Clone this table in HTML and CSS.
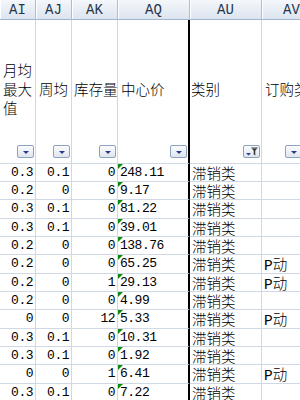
FILE: index.html
```html
<!DOCTYPE html>
<html lang="zh">
<head>
<meta charset="utf-8">
<link rel="stylesheet" href="styles.css">
</head>
<body>
<div class="sheet">
  <div class="row hdr">
    <div class="c">AI</div>
    <div class="c">AJ</div>
    <div class="c">AK</div>
    <div class="c">AQ</div>
    <div class="c">AU</div>
    <div class="c">AV</div>
  </div>
  <div class="row title">
    <div class="c"><span class="t">月均最大值</span><span class="fb"><span class="ar"></span></span></div>
    <div class="c"><span class="t">周均</span><span class="fb"><span class="ar"></span></span></div>
    <div class="c nw"><span class="t">库存量</span><span class="fb"><span class="ar"></span></span></div>
    <div class="c aq"><span class="t">中心价</span><span class="fb"><span class="ar"></span></span></div>
    <div class="c"><span class="t">类别</span><span class="fb fb-on"><svg width="15" height="11" viewBox="0 0 15 11"><path d="M2 7h5l-2.5 2.5z" fill="#2a3f8f"/><path d="M7 1.5h7l-2.7 3.3v4.7l-1.6-1v-3.7z" fill="#3a3a3a"/><path d="M8 2h5" stroke="#9a9a9a" stroke-width="1"/></svg></span></div>
    <div class="c nw last"><span class="t">订购类别</span><span class="fb"><span class="ar"></span></span></div>
  </div>
  <div class="row d"><div class="c n">0.3</div><div class="c n">0.1</div><div class="c n">0</div><div class="c aq">248.11</div><div class="c k">滞销类</div><div class="c k"></div></div>
  <div class="row d"><div class="c n">0.2</div><div class="c n">0</div><div class="c n">6</div><div class="c aq">9.17</div><div class="c k">滞销类</div><div class="c k"></div></div>
  <div class="row d"><div class="c n">0.3</div><div class="c n">0.1</div><div class="c n">0</div><div class="c aq">81.22</div><div class="c k">滞销类</div><div class="c k"></div></div>
  <div class="row d"><div class="c n">0.3</div><div class="c n">0.1</div><div class="c n">0</div><div class="c aq">39.01</div><div class="c k">滞销类</div><div class="c k"></div></div>
  <div class="row d"><div class="c n">0.2</div><div class="c n">0</div><div class="c n">0</div><div class="c aq">138.76</div><div class="c k">滞销类</div><div class="c k"></div></div>
  <div class="row d"><div class="c n">0.2</div><div class="c n">0</div><div class="c n">0</div><div class="c aq">65.25</div><div class="c k">滞销类</div><div class="c k">P动</div></div>
  <div class="row d"><div class="c n">0.2</div><div class="c n">0</div><div class="c n">1</div><div class="c aq">29.13</div><div class="c k">滞销类</div><div class="c k">P动</div></div>
  <div class="row d"><div class="c n">0.2</div><div class="c n">0</div><div class="c n">0</div><div class="c aq">4.99</div><div class="c k">滞销类</div><div class="c k"></div></div>
  <div class="row d"><div class="c n">0</div><div class="c n">0</div><div class="c n">12</div><div class="c aq">5.33</div><div class="c k">滞销类</div><div class="c k">P动</div></div>
  <div class="row d"><div class="c n">0.3</div><div class="c n">0.1</div><div class="c n">0</div><div class="c aq">10.31</div><div class="c k">滞销类</div><div class="c k"></div></div>
  <div class="row d"><div class="c n">0.3</div><div class="c n">0.1</div><div class="c n">0</div><div class="c aq">1.92</div><div class="c k">滞销类</div><div class="c k"></div></div>
  <div class="row d"><div class="c n">0</div><div class="c n">0</div><div class="c n">1</div><div class="c aq">6.41</div><div class="c k">滞销类</div><div class="c k">P动</div></div>
  <div class="row d"><div class="c n">0.3</div><div class="c n">0.1</div><div class="c n">0</div><div class="c aq">7.22</div><div class="c k">滞销类</div><div class="c k"></div></div>
  <div class="row d"><div class="c n"></div><div class="c n"></div><div class="c n"></div><div class="c aq"></div><div class="c k"></div><div class="c k"></div></div>
</div>
</body>
</html>
```

FILE: styles.css
```css
html, body {
  margin: 0;
  padding: 0;
  background: #fff;
  overflow: hidden;
}
.sheet {
  width: 300px;
  height: 400px;
  overflow: hidden;
  font-family: "Liberation Mono", "Noto Sans CJK SC", monospace;
  font-size: 13px;
  color: #000;
}
.row {
  display: grid;
  grid-template-columns: 36px 36px 46px 72px 72px 60px;
  width: 322px;
}
.c {
  box-sizing: border-box;
  border-right: 1px solid #d0d7e5;
  border-bottom: 1px solid #d0d7e5;
  position: relative;
  overflow: hidden;
  white-space: nowrap;
}
/* column letters */
.hdr {
  height: 20px;
}
.hdr .c {
  background: linear-gradient(#f4f7fb, #dce4ef);
  border-right: 1px solid #a9bdd6;
  border-bottom: 1px solid #9eb6ce;
  box-shadow: inset 1px 0 0 #fdfeff;
  display: flex;
  align-items: center;
  justify-content: center;
  color: #27364a;
  font-size: 14px;
  padding-top: 1px;
}
/* field names */
.title {
  height: 144px;
}
.title .c {
  display: flex;
  align-items: center;
  padding-left: 3px;
  font-size: 14.5px;
  line-height: 19px;
  white-space: normal;
  font-weight: 300;
}
.title .c:nth-child(5) {
  padding-left: 1px;
}
.title .nw {
  white-space: nowrap;
  overflow: visible;
}
.title .nw:nth-child(3) {
  padding-left: 2px;
}
.title .t {
  display: block;
}
.fb {
  position: absolute;
  right: 1px;
  bottom: 5px;
  width: 17px;
  height: 13px;
  box-sizing: border-box;
  border: 1px solid #8ea2c0;
  border-radius: 2px;
  background: linear-gradient(#fbfcfe, #dfe5ee);
  display: flex;
  align-items: center;
  justify-content: center;
}
.title .last .fb {
  right: auto;
  left: 23px;
}
.ar {
  width: 0;
  height: 0;
  border-left: 3px solid transparent;
  border-right: 3px solid transparent;
  border-top: 3px solid #26398a;
  margin-top: 2px;
}
.fb-on svg {
  display: block;
}
/* data rows */
.d {
  height: 18px;
}
.d:nth-child(3n+2) {
  height: 19px;
}
.d .c {
  display: flex;
  align-items: center;
  padding-bottom: 1px;
  letter-spacing: -0.5px;
}
.d .n {
  justify-content: flex-end;
  padding-right: 2px;
}
.c.aq {
  border-right: 2px solid #000;
}
.d .aq {
  padding-left: 2px;
}
.d .aq::before {
  content: "";
  position: absolute;
  top: 0;
  left: 0;
  width: 0;
  height: 0;
  border-top: 5px solid #0b8a0b;
  border-right: 5px solid transparent;
}
.d .k {
  font-size: 14.5px;
  font-weight: 300;
  padding-left: 2px;
  letter-spacing: 0;
}
```
